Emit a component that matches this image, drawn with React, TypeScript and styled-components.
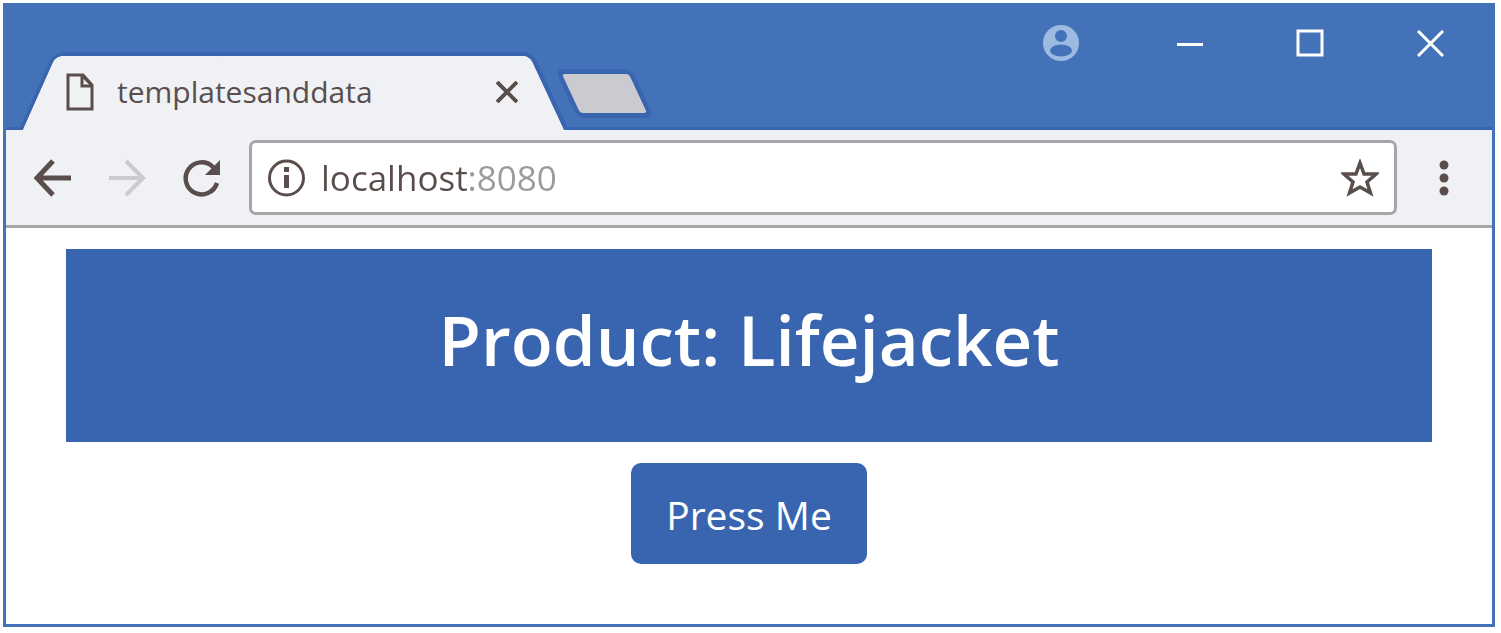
import React from "react";
import styled, { createGlobalStyle } from "styled-components";

const color = {
  frame: "#4472b8",
  accent: "#3965b0",
  chrome: "#f0f1f4",
  ink: "#5a4e4c",
  line: "#a6a6a8",
  muted: "#c9cbd0",
  port: "#9a9a9e",
};

const GlobalStyle = createGlobalStyle`
  * { box-sizing: border-box; }
  body {
    margin: 0;
    background: #fff;
    font-family: "Open Sans", "Noto Sans", sans-serif;
  }
  button { font: inherit; cursor: pointer; }
`;

const BrowserWindow = styled.div`
  margin: 3px 6px 6px 3px;
  border: 3px solid ${color.frame};
  background: #fff;
`;

const TabStrip = styled.header`
  display: flex;
  height: 124px;
  padding: 0 2px 0 30px;
  background: ${color.frame};
  box-shadow: inset 0 -3px ${color.accent};
`;

const Tab = styled.div`
  position: relative;
  isolation: isolate;
  display: flex;
  align-items: center;
  flex: 0 1 515px;
  align-self: flex-end;
  height: 78px;
  padding: 2px 32px 0 30px;
  color: ${color.ink};

  &::before,
  &::after {
    content: "";
    position: absolute;
    z-index: -1;
    top: 0;
    bottom: 0;
    width: 60%;
    background: ${color.chrome};
    background-clip: padding-box;
    border-top: 4px solid ${color.accent};
  }
  &::before {
    left: 0;
    border-left: 4px solid ${color.accent};
    border-top-left-radius: 10px;
    transform: skewX(-24deg);
  }
  &::after {
    right: 0;
    border-right: 5px solid ${color.accent};
    border-top-right-radius: 10px;
    transform: skewX(25deg);
  }
`;

const TabTitle = styled.span`
  flex: 1;
  margin-left: 23px;
  font-size: 30px;
  line-height: 40px;
  font-weight: 500;
  white-space: nowrap;
`;

const IconButton = styled.button<{ $width: number; $tone?: string }>`
  display: flex;
  align-items: center;
  justify-content: center;
  flex: none;
  width: ${(p) => p.$width}px;
  padding: 0;
  border: 0;
  background: none;
  color: ${(p) => p.$tone ?? color.ink};
`;

const NewTab = styled.button`
  align-self: flex-end;
  width: 77px;
  height: 49px;
  margin: 0 0 12px 15px;
  border: 5px solid ${color.accent};
  border-radius: 8px;
  background: ${color.muted};
  transform: skewX(25deg);
`;

const WindowControls = styled.div`
  display: flex;
  height: 74px;
  margin-left: auto;
`;

const Toolbar = styled.nav`
  display: flex;
  align-items: center;
  height: 98px;
  padding: 0 2px 0 10px;
  background: ${color.chrome};
  border-bottom: 3px solid ${color.line};
`;

const AddressBar = styled.div`
  display: flex;
  align-items: center;
  flex: 1;
  min-width: 0;
  height: 75px;
  margin-left: 11px;
  border: 3px solid ${color.line};
  border-radius: 7px;
  background: #fff;
`;

const AddressInput = styled.input`
  flex: 1;
  min-width: 0;
  padding: 0;
  border: 0;
  outline: 0;
  font: 500 35px/48px "Open Sans", "Noto Sans", sans-serif;
  color: transparent;
  caret-color: ${color.ink};
  background: linear-gradient(90deg, ${color.ink} 147px, ${color.port} 147px);
  background-clip: text;
  -webkit-background-clip: text;
`;

const Page = styled.main`
  display: flex;
  flex-direction: column;
  align-items: center;
  gap: 21px;
  padding: 21px 60px 60px;
`;

const Banner = styled.h1`
  width: 100%;
  margin: 0;
  padding: 40px 20px 53px;
  background: ${color.accent};
  color: #fff;
  font-size: 69px;
  font-weight: 600;
  line-height: 100px;
  text-align: center;
`;

const PressButton = styled.button`
  padding: 24px 35px 21px;
  border: 0;
  border-radius: 10px;
  background: ${color.accent};
  color: #fff;
  && { font-size: 39px; line-height: 56px; }
`;

const DocumentIcon = () => (
  <svg width="28" height="38" viewBox="0 0 28 38" fill="none" stroke="currentColor" strokeWidth="3" aria-hidden="true">
    <path d="M2 2H17L26 12V36H2Z M16 2V13H26" />
    <path d="M17 4L25 12" strokeWidth="2" />
  </svg>
);

const CrossIcon = ({ size, weight }: { size: number; weight: number }) => (
  <svg width={size} height={size} viewBox={`0 0 ${size} ${size}`} stroke="currentColor" strokeWidth={weight} aria-hidden="true">
    <path d={`M1 1L${size - 1} ${size - 1}M${size - 1} 1L1 ${size - 1}`} />
  </svg>
);

const ArrowIcon = ({ forward }: { forward?: boolean }) => (
  <svg width="38" height="38" viewBox="0 0 38 38" fill="none" stroke="currentColor" strokeWidth={forward ? 4 : 5} aria-hidden="true">
    <path d={forward ? "M1 19H36M18 2L35 19L18 36" : "M37 19H3M19 2L3 19L19 36"} />
  </svg>
);

const ReloadIcon = () => (
  <svg width="38" height="38" viewBox="0 0 38 38" fill="none" aria-hidden="true">
    <path d="M35 24A16 16 0 1 1 31 8L33 11" stroke="currentColor" strokeWidth="4.500" />
    <path d="M38 1V16H23Z" fill="currentColor" />
  </svg>
);

const InfoIcon = () => (
  <svg width="38" height="38" viewBox="0 0 38 38" fill="none" stroke="currentColor" aria-hidden="true">
    <circle cx="18.500" cy="19" r="17" strokeWidth="3" />
    <path d="M18.500 8V13M18.500 16V29" strokeWidth="5" />
  </svg>
);

const StarIcon = () => (
  <svg width="38" height="38" viewBox="0 0 38 38" fill="none" stroke="currentColor" strokeWidth="3.500" aria-hidden="true">
    <path d="M19 4L23 15L35 15L26 23L29.500 34L19 28L8.500 34L12 23L3 15L15 15Z" />
  </svg>
);

const MenuIcon = () => (
  <svg width="10" height="38" viewBox="0 0 10 38" fill="currentColor" aria-hidden="true">
    <circle cx="5" cy="6" r="4.500" />
    <circle cx="5" cy="19" r="4.500" />
    <circle cx="5" cy="32" r="4.500" />
  </svg>
);

const ProfileIcon = () => (
  <svg width="36" height="36" viewBox="0 0 36 36" aria-hidden="true">
    <circle cx="18" cy="18" r="18" fill="currentColor" />
    <circle cx="18" cy="11" r="6" fill={color.frame} />
    <ellipse cx="18" cy="25.500" rx="11" ry="6" fill={color.frame} />
  </svg>
);

const MinimizeIcon = () => (
  <svg width="26" height="26" viewBox="0 0 26 26" stroke="currentColor" strokeWidth="3" aria-hidden="true">
    <path d="M0 14.500H26" />
  </svg>
);

const MaximizeIcon = () => (
  <svg width="28" height="28" viewBox="0 0 28 28" fill="none" stroke="currentColor" strokeWidth="3" aria-hidden="true">
    <rect x="2" y="2" width="24" height="24" />
  </svg>
);

export default function App() {
  return (
    <>
      <GlobalStyle />
      <BrowserWindow>
        <TabStrip>
          <Tab>
            <DocumentIcon />
            <TabTitle>templatesanddata</TabTitle>
            <IconButton $width={24} aria-label="Close tab">
              <CrossIcon size={22} weight={4} />
            </IconButton>
          </Tab>
          <NewTab aria-label="New tab" />
          <WindowControls>
            <IconButton $width={138} $tone="#9dbbe2" aria-label="Profile">
              <ProfileIcon />
            </IconButton>
            <IconButton $width={120} $tone="#fff" aria-label="Minimize">
              <MinimizeIcon />
            </IconButton>
            <IconButton $width={120} $tone="#fff" aria-label="Maximize">
              <MaximizeIcon />
            </IconButton>
            <IconButton $width={120} $tone="#fff" aria-label="Close window">
              <CrossIcon size={27} weight={3} />
            </IconButton>
          </WindowControls>
        </TabStrip>
        <Toolbar>
          <IconButton $width={74} aria-label="Back">
            <ArrowIcon />
          </IconButton>
          <IconButton $width={74} $tone={color.muted} aria-label="Forward">
            <ArrowIcon forward />
          </IconButton>
          <IconButton $width={74} aria-label="Reload">
            <ReloadIcon />
          </IconButton>
          <AddressBar>
            <IconButton $width={69} aria-label="Site information">
              <InfoIcon />
            </IconButton>
            <AddressInput aria-label="Address" defaultValue="localhost:8080" spellCheck={false} />
            <IconButton $width={69} aria-label="Bookmark this page">
              <StarIcon />
            </IconButton>
          </AddressBar>
          <IconButton $width={93} aria-label="Menu">
            <MenuIcon />
          </IconButton>
        </Toolbar>
        <Page>
          <Banner>Product: Lifejacket</Banner>
          <PressButton>Press Me</PressButton>
        </Page>
      </BrowserWindow>
    </>
  );
}
